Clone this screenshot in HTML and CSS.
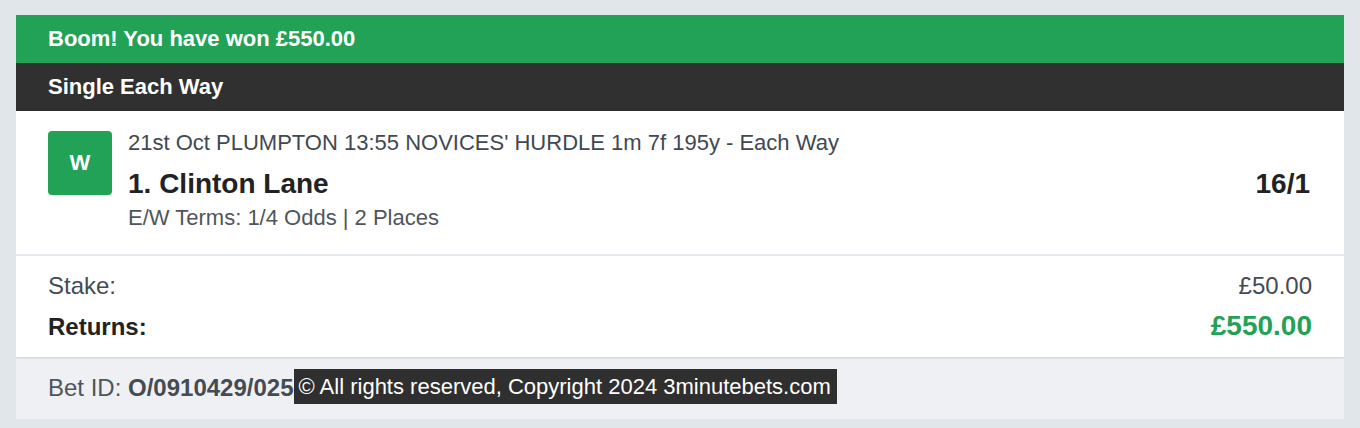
FILE: index.html
```html
<!DOCTYPE html>
<html>

    <head>
        <title>Bet Receipt</title>
        <meta name="viewport" content="width=device-width, initial-scale=1.0">
        <link rel="stylesheet" href="styles.css">
    </head>

    <body>
        <div class="receipt">
            <div class="banner">Boom! You have won £550.00</div>
            <div class="bet-type">Single Each Way</div>

            <div class="selection">
                <div class="badge">W</div>
                <div class="selection-info">
                    <div class="event">21st Oct PLUMPTON 13:55 NOVICES' HURDLE 1m 7f 195y - Each Way</div>
                    <div class="runner-row">
                        <span class="runner">1. Clinton Lane</span>
                        <span class="odds">16/1</span>
                    </div>
                    <div class="terms">E/W Terms: 1/4 Odds | 2 Places</div>
                </div>
            </div>

            <div class="totals">
                <div class="total-row">
                    <span>Stake:</span>
                    <span>£50.00</span>
                </div>
                <div class="total-row returns">
                    <span>Returns:</span>
                    <span class="returns-value">£550.00</span>
                </div>
            </div>

            <div class="receipt-footer">Bet ID: <strong>O/0910429/025</strong><span class="copyright">© All rights reserved, Copyright 2024 3minutebets.com</span></div>
        </div>
    </body>

</html>
```

FILE: styles.css
```css
body {
    font-family: "Liberation Sans", Arial, sans-serif;
    background: #e1e6ea;
    margin: 15px 16px 10px;
}

.receipt {
    background: #fff;
}

.banner,
.bet-type {
    height: 48px;
    line-height: 48px;
    padding: 0 32px;
    color: #fff;
    font-size: 22px;
    font-weight: bold;
}

.banner {
    background: #21a256;
}

.bet-type {
    background: #303030;
}

.selection {
    display: flex;
    gap: 16px;
    padding: 20px 32px 24px;
    border-bottom: 2px solid #e5eaef;
}

.badge {
    flex: none;
    width: 64px;
    height: 64px;
    line-height: 64px;
    text-align: center;
    border-radius: 4px;
    background: #21a256;
    color: #fff;
    font-size: 22px;
    font-weight: bold;
}

.selection-info {
    flex: 1;
}

.event {
    font-size: 22px;
    line-height: 24px;
    color: #414852;
}

.runner-row {
    display: flex;
    justify-content: space-between;
    margin-top: 12px;
    font-size: 28px;
    line-height: 34px;
    font-weight: bold;
    color: #222;
}

.odds {
    margin-right: 2px;
}

.terms {
    margin-top: 5px;
    font-size: 22px;
    line-height: 24px;
    color: #50555c;
}

.totals {
    padding: 10px 32px;
    box-shadow: 0 1px 2px rgba(0, 0, 0, 0.15);
    position: relative;
}

.total-row {
    display: flex;
    justify-content: space-between;
    align-items: baseline;
    font-size: 24px;
    line-height: 40px;
    color: #444b54;
}

.total-row.returns {
    font-weight: bold;
    color: #222;
}

.returns-value {
    font-size: 28px;
    color: #21a256;
}

.receipt-footer {
    background: #eef0f3;
    padding: 12px 32px 13px;
    font-size: 24px;
    line-height: 36px;
    color: #50555c;
}

.receipt-footer strong {
    color: #454b52;
}

.copyright {
    display: inline-block;
    vertical-align: 2px;
    padding: 0 6px 0 5px;
    background: #2f2f2f;
    color: #fff;
    font-size: 22px;
    line-height: 35px;
}
```
